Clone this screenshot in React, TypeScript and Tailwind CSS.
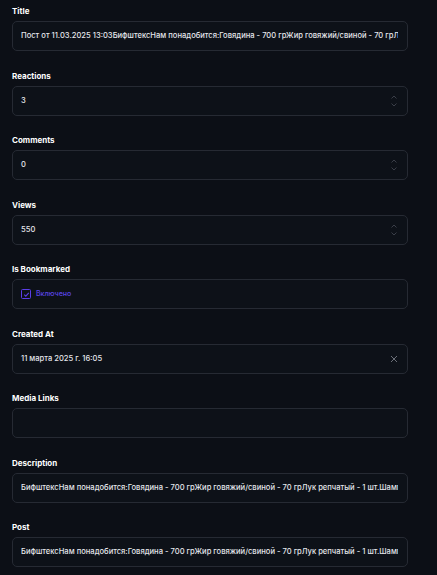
import React from 'react';

const inputBox =
  'h-[30px] w-[396px] rounded-[5px] border border-[#262a33] bg-[#0d1118] flex items-center pl-[8px] pr-[9px] text-[7.6px] font-medium text-[#e4e6eb] overflow-hidden whitespace-nowrap';

const Label = ({ children }: { children: React.ReactNode }) => (
  <div className="text-[8px] leading-[12px] font-bold text-white">{children}</div>
);

const Spinner = () => (
  <svg width="8" height="14" viewBox="0 0 8 14" fill="none" className="ml-auto shrink-0">
    <path d="M1.5 4.5 L4 2 L6.5 4.5" stroke="#3a3e48" strokeWidth="1" />
    <path d="M1.5 9.5 L4 12 L6.5 9.5" stroke="#3a3e48" strokeWidth="1" />
  </svg>
);

const Field = ({ label, children }: { label: string; children?: React.ReactNode }) => (
  <div className="flex flex-col gap-[4px]">
    <Label>{label}</Label>
    <div className={inputBox}>{children}</div>
  </div>
);

const longText =
  'БифштексНам понадобится:Говядина - 700 грЖир говяжий/свиной - 70 грЛук репчатый - 1 шт.Шампиньоны - 100 гр';

const App = () => {
  return (
    <div
      className="min-h-[575px] bg-[#0c0f16] pl-[12px] pt-[5px] flex flex-col gap-[18.5px]"
      style={{ fontFamily: 'Inter, "Noto Sans", sans-serif' }}
    >
      <Field label="Title">
        <span className="overflow-hidden">Пост от 11.03.2025 13:03{longText}</span>
      </Field>
      <Field label="Reactions">
        <span>3</span>
        <Spinner />
      </Field>
      <Field label="Comments">
        <span>0</span>
        <Spinner />
      </Field>
      <Field label="Views">
        <span>550</span>
        <Spinner />
      </Field>
      <Field label="Is Bookmarked">
        <div className="flex items-center gap-[5px]">
          <div className="w-[10px] h-[10px] rounded-[1.5px] border-[1.5px] border-[#5b3ee8] flex items-center justify-center">
            <svg width="7" height="7" viewBox="0 0 7 7" fill="none">
              <path d="M1.2 3.6 L2.8 5.1 L5.8 1.8" stroke="#5b3ee8" strokeWidth="1.1" />
            </svg>
          </div>
          <span className="text-[7px] font-medium text-[#5a45e6]">Включено</span>
        </div>
      </Field>
      <Field label="Created At">
        <span>11 марта 2025 г. 16:05</span>
        <svg width="8" height="8" viewBox="0 0 8 8" fill="none" className="ml-auto shrink-0">
          <path d="M1 1 L7 7 M7 1 L1 7" stroke="#6b6f78" strokeWidth="1" />
        </svg>
      </Field>
      <Field label="Media Links" />
      <Field label="Description">
        <span className="overflow-hidden">{longText}</span>
      </Field>
      <Field label="Post">
        <span className="overflow-hidden">{longText}</span>
      </Field>
    </div>
  );
};

export default App;
